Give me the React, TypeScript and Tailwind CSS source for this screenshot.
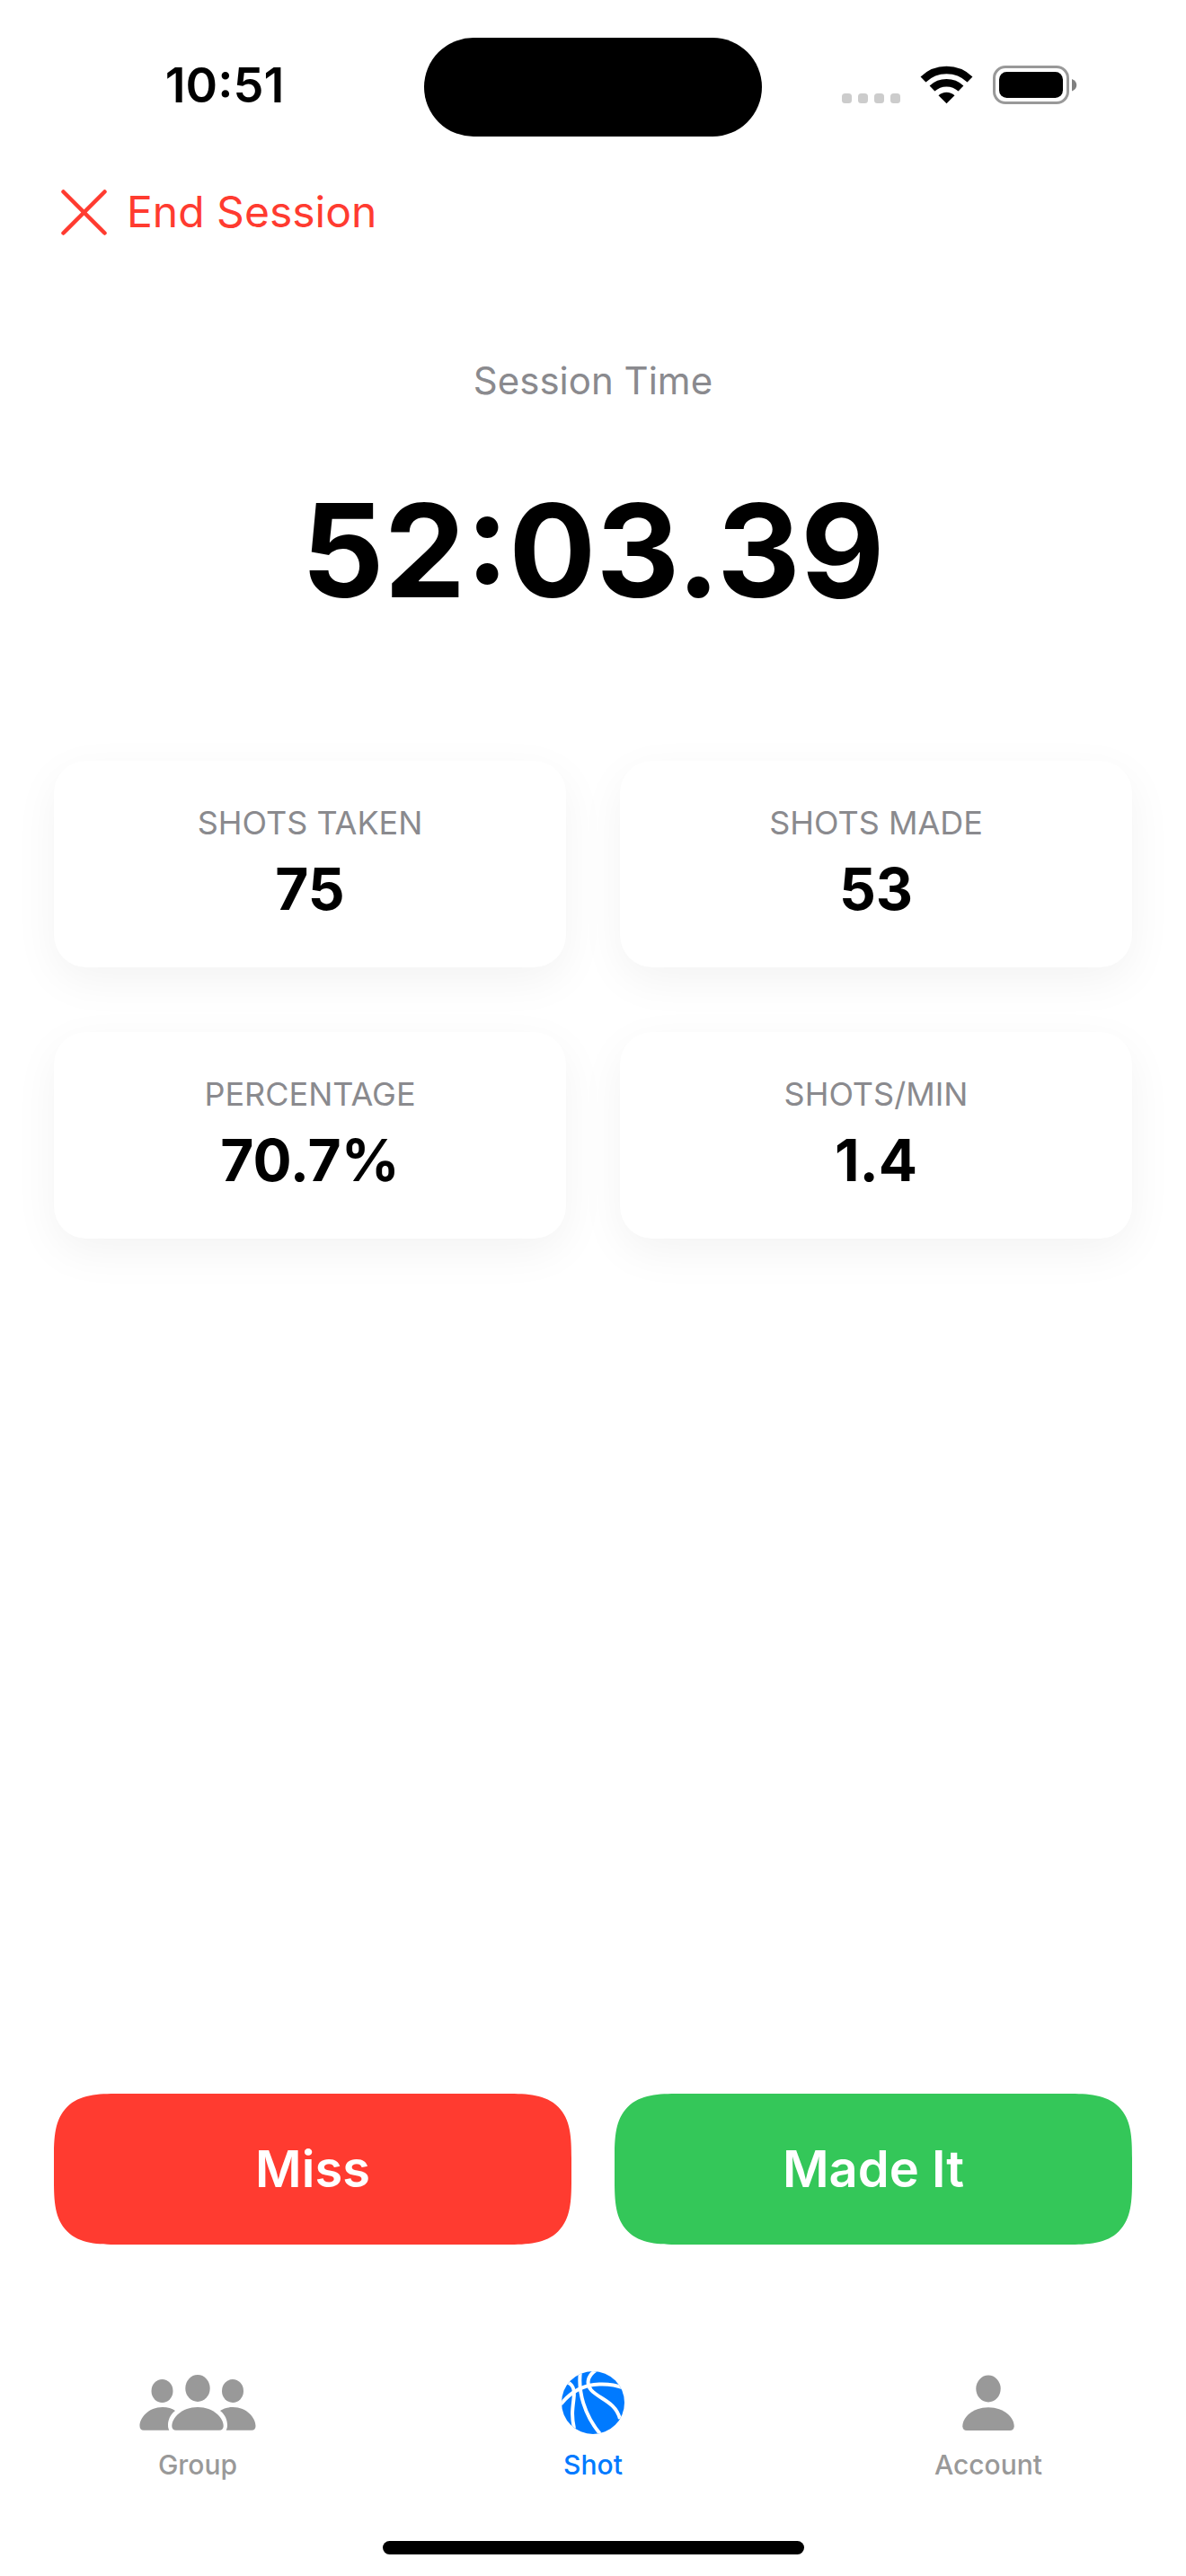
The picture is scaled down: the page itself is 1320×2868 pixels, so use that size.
import React, { useState } from 'react';

interface Stat {
  label: string;
  value: string;
}

const stats: Stat[] = [
  { label: 'SHOTS TAKEN', value: '75' },
  { label: 'SHOTS MADE', value: '53' },
  { label: 'PERCENTAGE', value: '70.7%' },
  { label: 'SHOTS/MIN', value: '1.4' },
];

const GroupIcon = () => (
  <svg width="130" height="70" viewBox="0 0 130 70" fill="currentColor" aria-hidden="true">
    <ellipse cx="25.5" cy="22" rx="12" ry="13" />
    <ellipse cx="104" cy="22" rx="12" ry="13" />
    <ellipse cx="65" cy="19" rx="13.7" ry="15" />
    <path d="M5 65.7C2 65.7 0.5 64 0.5 61C0.5 52 10 40 26 40C31.5 40 36.5 41.5 40 44C34 48.5 32 55 32 60C32 62 32.3 64 33.3 65.7Z" />
    <path d="M125 65.7C128 65.7 129.5 64 129.5 61C129.5 52 120 40 104 40C98.5 40 93.5 41.5 90 44C96 48.5 98 55 98 60C98 62 97.7 64 96.7 65.7Z" />
    <path d="M41 65.7C38 65.7 36.3 64 36.3 61C36.3 52 47 40 65 40C83 40 93.7 52 93.7 61C93.7 64 92 65.7 89 65.7Z" />
  </svg>
);

const BallIcon = () => (
  <svg width="70" height="70" viewBox="0 0 70 70" aria-hidden="true">
    <clipPath id="ball">
      <circle cx="35" cy="35" r="35" />
    </clipPath>
    <circle cx="35" cy="35" r="35" fill="currentColor" />
    <g clipPath="url(#ball)" fill="none" stroke="white" strokeWidth="4">
      <path d="M-1 37C10 23 24 15 42 14.5C53 14 61 15.5 70 19" />
      <path d="M21 0C18 22 25 49 44 71" />
      <path d="M38 -1C29 5 27 14 33 21C42 31 60 34 65 53" />
      <path d="M5 12C13 14 15 20 13.5 31C12 43 11 50 14 64" />
    </g>
  </svg>
);

const PersonIcon = () => (
  <svg width="58" height="70" viewBox="0 0 58 70" fill="currentColor" aria-hidden="true">
    <ellipse cx="29" cy="19.5" rx="13.7" ry="15" />
    <path d="M5 66C2 66 0.3 64.3 0.3 61.3C0.3 52 11 40.3 29 40.3C47 40.3 57.7 52 57.7 61.3C57.7 64.3 56 66 53 66Z" />
  </svg>
);

const StatusIcons = () => (
  <svg width="262" height="44" viewBox="0 0 262 44" aria-hidden="true">
    <g fill="#cccccc">
      <rect x="0" y="31" width="11" height="11" rx="3.5" />
      <rect x="18" y="31" width="11" height="11" rx="3.5" />
      <rect x="36" y="31" width="11" height="11" rx="3.5" />
      <rect x="54" y="31" width="11" height="11" rx="3.5" />
    </g>
    <g fill="none" stroke="black" strokeWidth="8.5">
      <path d="M90.5 15.5A37.5 37.5 0 0 1 142.5 15.5" />
      <path d="M100.5 25.5A23.5 23.5 0 0 1 132.5 25.5" />
    </g>
    <path d="M107.5 33.3A13 13 0 0 1 125.5 33.3L116.5 42.3Z" />
    <rect x="169.5" y="1.5" width="82" height="40" rx="12.5" fill="none" stroke="#999999" strokeWidth="3" />
    <rect x="175" y="7" width="71" height="29" rx="8.5" />
    <path d="M256 15C263 17.5 263 26 256 28.5Z" fill="#808080" />
  </svg>
);

const tabs = [
  { name: 'Group', Icon: GroupIcon },
  { name: 'Shot', Icon: BallIcon },
  { name: 'Account', Icon: PersonIcon },
];

const App: React.FC = () => {
  const [active, setActive] = useState('Shot');

  return (
    <div className="flex min-h-screen flex-col bg-white font-['Inter',sans-serif] text-black">
      <header className="grid grid-cols-[1fr_376px_1fr] items-center pt-[42px]">
        <time className="pb-1 pl-7 text-center text-[54px] leading-none font-semibold">10:51</time>
        <div className="h-[110px] rounded-full bg-black"></div>
        <div className="flex justify-end pr-[121px] pb-1">
          <StatusIcons />
        </div>
      </header>

      <main className="flex grow flex-col px-[60px]">
        <button type="button" className="mt-[54px] flex items-center gap-[22px] self-start pl-2 text-[48px] leading-[60px] text-[#ff3b30]">
          <svg width="51" height="51" viewBox="0 0 51 51" stroke="currentColor" strokeWidth="4.5" strokeLinecap="round" aria-hidden="true">
            <path d="M2.5 2.5L48.5 48.5M48.5 2.5L2.5 48.5" />
          </svg>
          End Session
        </button>

        <p className="mt-[132px] text-center text-[42px] leading-[52px] text-[#8a8a8e]">Session Time</p>
        <h1 className="mt-[76px] text-center text-[144px] leading-[174px] font-bold">52:03.39</h1>

        <div className="mt-[147px] grid grid-cols-2 gap-x-[60px] gap-y-[72px]">
          {stats.map((stat) => (
            <div
              key={stat.label}
              className="flex flex-col items-center gap-[14px] rounded-[36px] bg-white py-12 shadow-[0_15px_50px_rgba(0,0,0,0.05)]"
            >
              <span className="text-[36px] leading-[42px] text-[#8a8a8e]">{stat.label}</span>
              <span className="text-[64px] leading-[78px] font-bold">{stat.value}</span>
            </div>
          ))}
        </div>

        <div className="mt-auto grid grid-cols-2 gap-12 text-[56px] leading-[72px] font-semibold text-white">
          <button type="button" className="rounded-[72px] bg-[#ff3b30] py-12 [corner-shape:superellipse(1.6)]">Miss</button>
          <button type="button" className="rounded-[72px] bg-[#34c759] py-12 [corner-shape:superellipse(1.6)]">Made It</button>
        </div>
      </main>

      <nav className="mt-[141px] grid grid-cols-3">
        {tabs.map(({ name, Icon }) => (
          <button
            key={name}
            type="button"
            onClick={() => setActive(name)}
            className={`flex flex-col items-center gap-4 text-[30px] leading-[36px] font-medium ${
              active === name ? 'text-[#007aff]' : 'text-[#999999]'
            }`}
          >
            <Icon />
            {name}
          </button>
        ))}
      </nav>

      <div className="mt-[67px] mb-6 h-[15px] w-[469px] self-center rounded-full bg-black"></div>
    </div>
  );
};

export default App;
